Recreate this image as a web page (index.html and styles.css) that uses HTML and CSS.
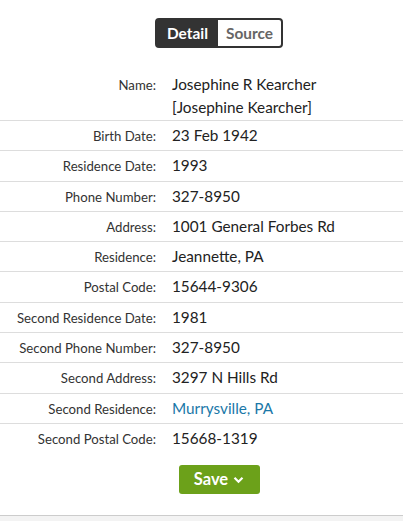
FILE: index.html
```
<!DOCTYPE html>
<html>
<head>
<meta charset="utf-8">
<link rel="stylesheet" href="styles.css">
</head>
<body>
<div class="page">
  <div class="toggle-wrap">
    <div class="toggle">
      <span class="tab tab-active">Detail</span>
      <span class="tab">Source</span>
    </div>
  </div>
  <div class="rows">
    <div class="row row-name"><div class="label">Name:</div><div class="value value-name">Josephine R Kearcher<br>[Josephine Kearcher]</div></div>
    <div class="row"><div class="label">Birth Date:</div><div class="value">23 Feb 1942</div></div>
    <div class="row"><div class="label">Residence Date:</div><div class="value">1993</div></div>
    <div class="row"><div class="label">Phone Number:</div><div class="value">327-8950</div></div>
    <div class="row"><div class="label">Address:</div><div class="value">1001 General Forbes Rd</div></div>
    <div class="row"><div class="label">Residence:</div><div class="value">Jeannette, PA</div></div>
    <div class="row"><div class="label">Postal Code:</div><div class="value">15644-9306</div></div>
    <div class="row"><div class="label">Second Residence Date:</div><div class="value">1981</div></div>
    <div class="row"><div class="label">Second Phone Number:</div><div class="value">327-8950</div></div>
    <div class="row"><div class="label">Second Address:</div><div class="value">3297 N Hills Rd</div></div>
    <div class="row"><div class="label">Second Residence:</div><div class="value"><a class="link" href="#">Murrysville, PA</a></div></div>
    <div class="row row-last"><div class="label">Second Postal Code:</div><div class="value">15668-1319</div></div>
  </div>
  <div class="save-wrap">
    <button class="save">Save <svg class="chev" width="11" height="8" viewBox="0 0 11 8"><path d="M1.5 1.8 L5.5 5.8 L9.5 1.8" fill="none" stroke="#fff" stroke-width="2.2"/></svg></button>
  </div>
  <div class="footer"></div>
</div>
</body>
</html>
```
FILE: styles.css
```
html, body {
  margin: 0;
  padding: 0;
  background: #fff;
}
body {
  font-family: Lato, "Liberation Sans", sans-serif;
  color: #222;
}
.page {
  width: 403px;
  height: 521px;
  overflow: hidden;
  display: flex;
  flex-direction: column;
}
.toggle-wrap {
  display: flex;
  justify-content: center;
  padding-top: 18px;
}
.toggle {
  display: flex;
  background: #333;
  border: 2px solid #333;
  border-radius: 4px;
  height: 26px;
  margin-left: 35px;
}
.tab {
  font-weight: 700;
  font-size: 15.4px;
  line-height: 26px;
  padding: 0 8px 0 8px;
  color: #666;
  background: #fff;
  border-radius: 0 2px 2px 0;
}
.tab-active {
  color: #fff;
  background: #333;
  padding: 0 10px 0 10px;
  border-radius: 0;
}
.rows {
  margin-top: 20.6px;
}
.row {
  display: flex;
  align-items: baseline;
  padding: 4px 0;
  border-bottom: 1px solid #ddd;
}
.row-name {
  padding: 4px 0 1.4px;
}
.row-last {
  border-bottom: none;
}
.label {
  width: 156px;
  text-align: right;
  font-size: 13.2px;
  line-height: 19px;
  color: #333;
  flex: none;
}
.value {
  padding-left: 16px;
  font-size: 15.3px;
  line-height: 21.3px;
  color: #222;
}
.value-name {
  line-height: 23px;
}
.link {
  color: #1a78a8;
  text-decoration: none;
}
.save-wrap {
  display: flex;
  justify-content: center;
  padding-top: 11.7px;
  padding-left: 35px;
}
.save {
  background: #6ca11a;
  color: #fff;
  border: none;
  border-radius: 3px;
  font-family: Lato, "Liberation Sans", sans-serif;
  font-weight: 700;
  font-size: 16.5px;
  width: 81px;
  height: 29px;
  display: flex;
  align-items: center;
  justify-content: center;
  gap: 5px;
  padding: 0;
}
.chev {
  display: block;
  margin-top: 1px;
}
.footer {
  margin-top: auto;
  height: 5px;
  border-top: 1px solid #ccc;
  background: #f3f3f3;
}
```
